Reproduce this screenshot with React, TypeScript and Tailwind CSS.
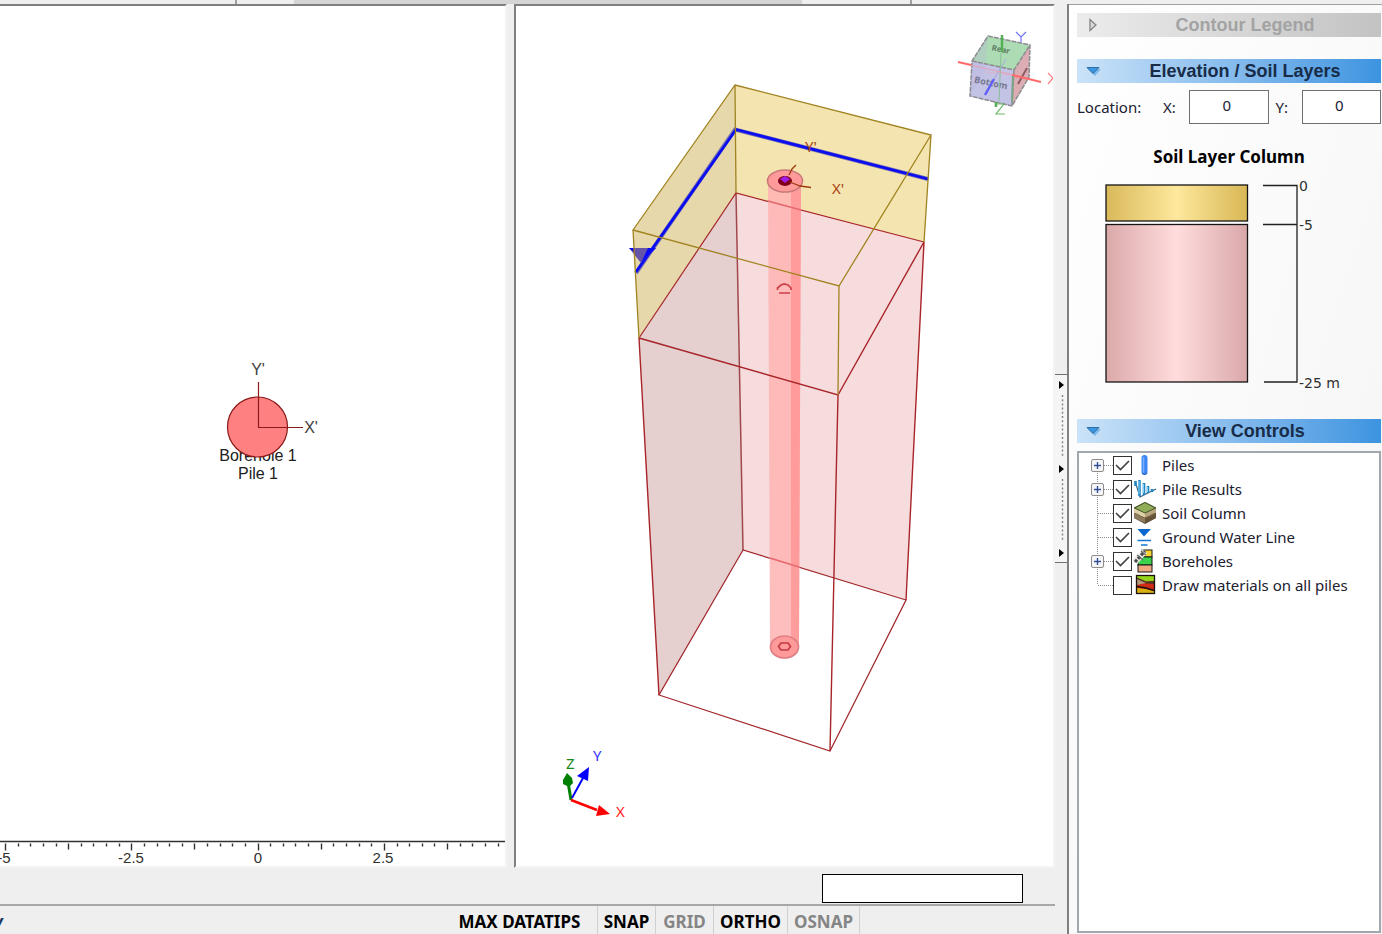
import { useState } from "react";
import type { ReactNode } from "react";

const TICKS = Array.from({ length: 40 }, (_, i) => i);
const RULER_LABELS = [
  { x: 4, text: "-5" },
  { x: 131, text: "-2.5" },
  { x: 258, text: "0" },
  { x: 383, text: "2.5" },
];

const MODES = [
  { name: "MAX DATATIPS", on: true },
  { name: "SNAP", on: true },
  { name: "GRID", on: false },
  { name: "ORTHO", on: true },
  { name: "OSNAP", on: false },
];

function PlanView() {
  return (
    <section aria-label="Plan view" className="flex min-w-0 flex-col overflow-hidden border-t-2 border-r-2 border-b-2 border-t-[#808080] border-r-[#f4f4f4] border-b-[#f4f4f4] bg-white">
      <svg viewBox="0 7 505 832" preserveAspectRatio="xMinYMid meet" className="min-h-0 w-full flex-1" fontFamily="'Liberation Sans', Arial, sans-serif" fontSize="16" textAnchor="middle">
        <text x="258" y="375" fill="#404040">Y'</text>
        <text x="311" y="433" fill="#404040">X'</text>
        <text x="258" y="461" fill="#202020">Borehole 1</text>
        <text x="258" y="479" fill="#202020">Pile 1</text>
        <circle cx="257.500" cy="427" r="30" fill="#ff8080" stroke="#8b1a1a" strokeWidth="1.2" />
        <path d="M258.5 382V427.500H303" fill="none" stroke="#8b1a1a" strokeWidth="1.2" />
      </svg>
      <svg viewBox="0 840 505 26" preserveAspectRatio="xMinYMid meet" className="h-[26px] w-full shrink-0" fontFamily="'Liberation Sans', Arial, sans-serif" fontSize="15" textAnchor="middle">
        <path d="M0 841.500H505" stroke="#303030" strokeWidth="1.6" />
        {TICKS.map((i) => (
          <path
            key={i}
            d={`M${Math.round(5 + i * 12.63) + 0.5} 843.500v${i % 10 === 0 ? 7 : i % 5 === 0 ? 6 : 3}`}
            stroke="#303030"
            strokeWidth="1.4"
          />
        ))}
        {RULER_LABELS.map((l) => (
          <text key={l.text} x={l.x} y="863" fill="#303030">{l.text}</text>
        ))}
      </svg>
    </section>
  );
}

function ViewCube() {
  return (
    <g>
      <path d="M972 62L1014 71 1012 107 970 97Z" fill="#c3c3e6" />
      <path d="M1014 71L1030 46 1029 78 1012 107Z" fill="#dcaeb4" />
      <path d="M988 37L1030 46 1014 71 972 62Z" fill="#addcb4" />
      <path d="M972 62L988 37 985 73 970 97" fill="#b9b4dc" fillOpacity=".3" />
      <path d="M985 73L1029 78" stroke="#d9b4cc" />
      <path d="M988 37L1030 46 1029 78 1012 107 970 97 972 62ZM972 62L1014 71 1030 46M1014 71L1012 107" fill="none" stroke="#8b8b90" strokeWidth="1.5" strokeDasharray="5 1" />
      <path d="M1013 75L1012 103" stroke="#7ba583" strokeWidth="2" />
      <path d="M1018 85L1027 69" stroke="#8d5a62" strokeWidth="2" />
      <text x="1001" y="53" fontSize="8" fontWeight="bold" fill="#5f7f66" textAnchor="middle" transform="rotate(12 1000 50)">Rear</text>
      <text x="991" y="87" fontSize="9" fontWeight="bold" fill="#777790" textAnchor="middle" transform="rotate(12 991 84)">Bottom</text>
      <path d="M1006 60L994 80" stroke="#a4a4e0" />
      <path d="M994 80L985 96" stroke="#6060ff" strokeWidth="2.5" />
      <path d="M1002 36V53" stroke="#55b055" strokeWidth="2.5" />
      <path d="M1001 54L999 102" stroke="#86bf96" />
      <path d="M996 103V108" stroke="#55a855" strokeWidth="2.5" />
      <path d="M970 66L1014 76" stroke="#e8a0b4" />
      <path d="M958 63L971 66M1012 76L1041 83" stroke="#ff6b6b" strokeWidth="2.2" />
      <path d="M1016 33L1021 38 1026 33M1021 38V43" fill="none" stroke="#7070ff" strokeWidth="1.2" />
      <path d="M996 105H1004L996 115H1005" fill="none" stroke="#68ba68" strokeWidth="1.2" />
      <path d="M1048 74L1053 79 1048 85" fill="none" stroke="#ff8080" strokeWidth="1.2" />
    </g>
  );
}

function ModelView() {
  return (
    <section aria-label="3D view" className="flex min-w-0 overflow-hidden border-2 border-t-[#808080] border-r-[#f4f4f4] border-b-[#f4f4f4] border-l-[#808080] bg-white">
      <svg viewBox="516 7 537 860" className="h-full w-full" fontFamily="'Noto Sans', sans-serif" fontSize="15">
        {/* soil faces behind the pile */}
        <path d="M736 194L924 243 906 601 743 551Z" fill="#f7dcdd" />
        <path d="M736 194L639 339 659 696 743 551Z" fill="#e5cfcf" />
        <path d="M735 86L931 136 924 243 736 194Z" fill="#f3e4b0" />
        <path d="M735 86L633 231 639 339 736 194Z" fill="#e6d8ab" />
        <path d="M736 194L743 551" stroke="#a0484c" strokeWidth="1.5" />
        <path d="M743 551L659 696 830 752 906 601Z" fill="none" stroke="#a02428" strokeWidth="1.2" />
        <path d="M639 339L736 194 924 243" fill="none" stroke="#a82428" strokeWidth="1.2" />

        {/* water table */}
        <path d="M636 274L735 130.500 928 180" fill="none" stroke="#7772b0" strokeWidth="4" />
        <path d="M636 273L736 130.500 928 180" fill="none" stroke="#0c0cf0" strokeWidth="2.800" />
        <path d="M629 249H656L641 264Z" fill="#6654a8" />
        <path d="M648 249H656L641 264ZM629 249L634 253V249Z" fill="#0808ff" />

        {/* pile shaft */}
        <path d="M768 184H801L799 648H770Z" fill="#ffb3b3" fillOpacity=".86" />
        <path d="M791 186H801L799 648H791Z" fill="#ff9494" fillOpacity=".8" />
        <path d="M768 202L801 211M770 559L799 568" stroke="#e86a70" strokeWidth="1.500" />
        <ellipse cx="785" cy="182" rx="17.5" ry="11" fill="#ff9a9a" stroke="#c87878" strokeWidth="1.500" />
        <ellipse cx="785" cy="182" rx="7" ry="5" fill="#800018" />
        <path d="M780 180L785 177 790 180 785 184Z" fill="#a01ce8" />
        <path d="M779 294H790M777.500 291V289L781 286 784 285 788 286 791 289V291" fill="none" stroke="#cc4048" strokeWidth="1.700" />
        <ellipse cx="784.500" cy="648" rx="14" ry="11" fill="#ff9a9a" stroke="#e08086" strokeWidth="1.700" />
        <path d="M778.500 647.500L781 644H788L790.500 647.500 788 651H781Z" fill="none" stroke="#c43b42" strokeWidth="1.700" />
        <path d="M789 176L792 170 796 166M790 183L800 187 811 188.500" fill="none" stroke="#a33a10" strokeWidth="1.300" />
        <text x="805" y="153" fill="#a84314">Y'</text>
        <text x="832" y="195" fill="#a84314">X'</text>

        {/* front wireframe */}
        <path d="M639 339L838 396 924 243 906 601M639 339L659 696M838 396L830 752" fill="none" stroke="#a82428" strokeWidth="1.400" />
        <path d="M735 86L931 136 839 287 633 231ZM735 86L736 194M633 231L639 339M839 287L838 396M931 136L924 243" fill="none" stroke="#a18320" strokeWidth="1.300" />

        <ViewCube />

        {/* axis triad */}
        <path d="M571 801L568 783" stroke="#008000" strokeWidth="3" />
        <path d="M567 774L572 779 573 784 569 788 563 785 563 781Z" fill="#008000" />
        <path d="M572 799L583 779" stroke="#0000ff" strokeWidth="2" />
        <path d="M589 768L577 777 588 782Z" fill="#0000ff" />
        <path d="M571 801L597 811" stroke="#f00" strokeWidth="2.500" />
        <path d="M599 806L610 815 596 817Z" fill="#f00" />
        <text x="566" y="770" fill="#188c18">Z</text>
        <text x="593" y="762" fill="#3030ff">Y</text>
        <text x="616" y="818" fill="#ff2020">X</text>
      </svg>
    </section>
  );
}

function StatusBar() {
  return (
    <footer className="flex h-[30px] items-stretch border-t-2 border-[#a8a8a8] font-['Noto_Sans',sans-serif] text-[17px] leading-8 font-bold">
      <div className="flex w-[450px] shrink-0 justify-start overflow-hidden">
        <span className="-ml-1.5 text-[#203864] italic">y</span>
      </div>
      {MODES.map((m) => (
        <button
          key={m.name}
          type="button"
          aria-pressed={m.on}
          className={`border-r border-[#d0d0d0] whitespace-nowrap ${
            m.name === "MAX DATATIPS" ? "w-[148px] pr-2" : m.name === "OSNAP" ? "w-[72px]" : m.name === "ORTHO" ? "w-[74px]" : "w-[58px]"
          } ${m.on ? "text-black" : "text-[#858585]"}`}
        >
          {m.name}
        </button>
      ))}
    </footer>
  );
}

function Splitter() {
  const arrows = [7, 91, 175];
  return (
    <div className="flex w-[14px] shrink-0 items-center border-r-2 border-[#808080] bg-[#efefef]">
      <button type="button" aria-label="Collapse side panel" className="mb-0.5 h-[189px] w-full border-y border-[#707070] bg-[#f5f5f5]">
        <svg viewBox="0 0 12 187" className="h-full w-full">
          {arrows.map((y) => (
            <path key={y} d={`M4 ${y - 1}L9 ${y + 3} 4 ${y + 7}Z`} fill="#000" />
          ))}
          <path d="M7.500 20V83M7.500 104V167" stroke="#888" strokeWidth="1.500" strokeDasharray="2 2.200" />
        </svg>
      </button>
    </div>
  );
}

function PanelHeader({ title, open = true }: { title: string; open?: boolean }) {
  return (
    <button
      type="button"
      aria-expanded={open}
      className={`flex h-6 w-full shrink-0 items-center bg-linear-to-r pl-2 font-['Liberation_Sans',sans-serif] text-[18px] leading-6 font-bold ${
        open ? "from-[#cbe3f8] to-[#3b94e0] text-[#182c48]" : "from-[#ececec] to-[#c3c3c3] text-[#a3a3a3]"
      }`}
    >
      <svg viewBox="0 0 16 16" className="h-4 w-4 shrink-0">
        {open ? (
          <>
            <path d="M3 6H16L10 13Z" fill="#7eb8e8" />
            <path d="M2 4.500H14L8 10.500Z" fill="#3c96e0" stroke="#2f6ea6" />
          </>
        ) : (
          <path d="M5 2.500V13.500L11 8Z" fill="#d8d8d8" stroke="#858585" strokeWidth="1.300" />
        )}
      </svg>
      <span className="flex-1 pl-2 text-center">{title}</span>
    </button>
  );
}

function SoilColumn() {
  return (
    <figure className="mt-[22px] shrink-0">
      <figcaption className="text-center text-[17px] leading-[22px] font-bold text-black">Soil Layer Column</figcaption>
      <svg viewBox="1077 168 304 228" preserveAspectRatio="xMidYMin meet" className="h-[228px] w-full" fontFamily="'DejaVu Sans', sans-serif" fontSize="14" fill="#303030">
        <defs>
          <linearGradient id="sand">
            <stop offset="0" stopColor="#d9b95a" />
            <stop offset=".5" stopColor="#fee89d" />
            <stop offset="1" stopColor="#d8b755" />
          </linearGradient>
          <linearGradient id="clay">
            <stop offset="0" stopColor="#dba9aa" />
            <stop offset=".5" stopColor="#ffdcdd" />
            <stop offset="1" stopColor="#d9a8a9" />
          </linearGradient>
        </defs>
        <rect x="1106" y="185" width="141.5" height="36" fill="url(#sand)" stroke="#151515" strokeWidth="1.300" />
        <rect x="1106" y="224.500" width="141.5" height="157.5" fill="url(#clay)" stroke="#151515" strokeWidth="1.300" />
        <path d="M1263 185.500H1297V382H1264M1263 224.500H1297" fill="none" stroke="#202020" strokeWidth="1.300" />
        <text x="1299" y="191">0</text>
        <text x="1299" y="230">-5</text>
        <text x="1299" y="388">-25 m</text>
      </svg>
    </figure>
  );
}

const PilesIcon = (
  <>
    <rect x="8.500" y="2" width="6" height="20" rx="3" fill="#3e86f4" />
    <path d="M10.500 4V20" stroke="#75aefc" strokeWidth="1.500" />
    <path d="M9 20q2.500 3 5 0" fill="none" stroke="#1e5ac8" />
  </>
);

const ResultsIcon = (
  <>
    <path d="M2 4L7 20 23 12" fill="none" stroke="#2b6180" strokeWidth="1.200" />
    <path d="M2.500 4V9M6.500 3V19M11 6V18M15 9V16M19 12V15" stroke="#2388c4" strokeWidth="2.600" />
    <path d="M6 4V17M10.500 7V16M14.500 10V15" stroke="#7fd0f4" />
  </>
);

const SoilIcon = (
  <>
    <path d="M12 1L23 6.500V17L12 23 1 17V6.500Z" fill="#4f4335" />
    <path d="M1 7L12 12V17L1 12Z" fill="#ded1a5" />
    <path d="M12 12L23 7V12L12 17Z" fill="#b9a57d" />
    <path d="M1 12L12 17V22L1 17Z" fill="#8e7b5d" />
    <path d="M12 17L23 12V17L12 22Z" fill="#67523a" />
    <path d="M12 1.500L22.500 7 12 12 1.500 7Z" fill="#91ad5a" stroke="#465b2a" />
    <path d="M2 12.500l3 1 2 1.500 5 2 5-2 2-1.500 3-1" fill="none" stroke="#7a6a4c" />
  </>
);

const WaterIcon = (
  <>
    <path d="M4.500 4H18L11 11.500Z" fill="#0866d0" />
    <path d="M4.500 15.500H18M8 20H14.500" stroke="#1479d8" strokeWidth="1.500" />
  </>
);

const BoreholeIcon = (
  <>
    <rect x="9" y="1" width="10" height="7" fill="#f6d22e" stroke="#161616" />
    <rect x="5" y="8" width="14" height="8" fill="#3bd34b" stroke="#161616" />
    <rect x="5" y="16" width="14" height="7" fill="#efaa82" stroke="#161616" />
    <path d="M2 13L12 2" stroke="#e8e8e8" strokeWidth="6" />
    <path d="M2 13L12 2" stroke="#474747" strokeWidth="3" strokeDasharray="3 1.5" />
    <path d="M4 6L10 11M8 2L13 6" stroke="#666" strokeWidth="1.200" />
  </>
);

const MaterialsIcon = (
  <>
    <rect x="3.500" y="2.500" width="18" height="18" fill="#d02a16" />
    <path d="M4 3H21V8L13 8.500 4 5Z" fill="#92d51a" />
    <path d="M4 4.500L13 8.500 21 8V11L13 10.500 4 8Z" fill="#513424" />
    <path d="M4 6L13 10 4 12Z" fill="#b49678" />
    <path d="M4 15L13 16 21 18V20H4Z" fill="#d9b012" />
    <path d="M4 13.500L13 15 21 17.500" fill="none" stroke="#1a100c" strokeWidth="1.500" />
    <rect x="3.500" y="2.500" width="18" height="18" fill="none" stroke="#1a100c" strokeWidth="1.300" />
  </>
);

type Layer = { id: string; label: string; icon: ReactNode; expandable?: boolean; checked: boolean };

const LAYERS: Layer[] = [
  { id: "piles", label: "Piles", icon: PilesIcon, expandable: true, checked: true },
  { id: "results", label: "Pile Results", icon: ResultsIcon, expandable: true, checked: true },
  { id: "soil", label: "Soil Column", icon: SoilIcon, checked: true },
  { id: "water", label: "Ground Water Line", icon: WaterIcon, checked: true },
  { id: "boreholes", label: "Boreholes", icon: BoreholeIcon, expandable: true, checked: true },
  { id: "materials", label: "Draw materials on all piles", icon: MaterialsIcon, checked: false },
];

function LayerRow({ layer, first, last }: { layer: Layer; first: boolean; last: boolean }) {
  const [checked, setChecked] = useState(layer.checked);
  return (
    <li className="flex h-6 items-center">
      <div className="relative h-6 w-[22px] shrink-0">
        <svg viewBox="0 0 22 24" className="h-6 w-[22px]">
          <path d={`M6.500 ${first ? 12 : 0}V${last ? 12 : 24}M7 12.500H22`} fill="none" stroke="#888" strokeDasharray="1 1" />
        </svg>
        {layer.expandable && (
          <button type="button" aria-label={`Expand ${layer.label}`} className="absolute top-1.5 left-0 h-[13px] w-[13px] rounded-xs border border-[#8c8c8c] bg-[#f6f6f6]">
            <svg viewBox="0 0 11 11" className="h-[11px] w-[11px]">
              <path d="M2 5.500H9M5.500 2V9" stroke="#34509c" strokeWidth="1.400" />
            </svg>
          </button>
        )}
      </div>
      <span className="relative h-[19px] w-5 shrink-0">
        <input
          id={layer.id}
          type="checkbox"
          checked={checked}
          onChange={(e) => setChecked(e.target.checked)}
          className="peer block h-[19px] w-[19px] appearance-none border border-[#333] bg-white"
        />
        <svg viewBox="0 0 19 19" className="pointer-events-none absolute top-0 left-0 hidden h-[19px] w-[19px] peer-checked:block">
          <path d="M3 9L7.500 13.500 16 5" fill="none" stroke="#444" strokeWidth="1.700" />
        </svg>
      </span>
      <svg viewBox="0 0 24 24" className="h-6 w-6 shrink-0">{layer.icon}</svg>
      <label htmlFor={layer.id} className="pl-[5px] whitespace-nowrap">{layer.label}</label>
    </li>
  );
}

function Sidebar() {
  return (
    <aside className="flex w-[313px] shrink-0 flex-col bg-linear-to-br from-white to-[#f4f4f4] pt-2 pr-px pb-px pl-2 font-['Noto_Sans',sans-serif] text-[15px] leading-6 text-[#202030]">
      <PanelHeader title="Contour Legend" open={false} />
      <div className="mt-[22px]">
        <PanelHeader title="Elevation / Soil Layers" />
      </div>
      <div className="mt-[7px] flex h-[34px] shrink-0 items-center">
        <span className="w-[86px]">Location:</span>
        <label htmlFor="loc-x" className="w-[26px]">X:</label>
        <input id="loc-x" defaultValue="0" className="h-[34px] min-w-0 flex-1 border border-[#707070] bg-white pr-1 pb-1 text-center" />
        <label htmlFor="loc-y" className="ml-[7px] w-[26px]">Y:</label>
        <input id="loc-y" defaultValue="0" className="h-[34px] min-w-0 flex-1 border border-[#707070] bg-white pr-1 pb-1 text-center" />
      </div>
      <SoilColumn />
      <div className="mt-[23px]">
        <PanelHeader title="View Controls" />
      </div>
      <ul className="mt-2 min-h-0 flex-1 border-2 border-[#a2a6ad] bg-white pl-3">
        {LAYERS.map((layer, i) => (
          <LayerRow key={layer.id} layer={layer} first={i === 0} last={i === LAYERS.length - 1} />
        ))}
      </ul>
    </aside>
  );
}

export default function App() {
  return (
    <div className="flex h-screen flex-col overflow-hidden bg-[#efefef]">
      <div className="flex h-1 shrink-0">
        <div className="w-[237px] border-r-2 border-[#a0a0a0]" />
        <div className="w-[57px]" />
        <div className="w-[508px] bg-[#d5d5d5]" />
        <div className="w-[110px] border-r-2 border-[#a0a0a0]" />
      </div>
      <div className="flex min-h-0 flex-1">
        <div className="flex min-w-0 flex-1 flex-col">
          <main className="grid min-h-0 flex-1 grid-cols-[507fr_541fr] grid-rows-1 gap-[7px]">
            <PlanView />
            <ModelView />
          </main>
          <div className="flex h-9 shrink-0 items-center justify-end pt-1 pr-8">
            <input aria-label="Command" className="h-[29px] w-[201px] border border-black bg-white px-1" />
          </div>
          <StatusBar />
        </div>
        <Splitter />
        <div className="flex border-t border-[#a0a0a0]">
          <Sidebar />
        </div>
      </div>
    </div>
  );
}
